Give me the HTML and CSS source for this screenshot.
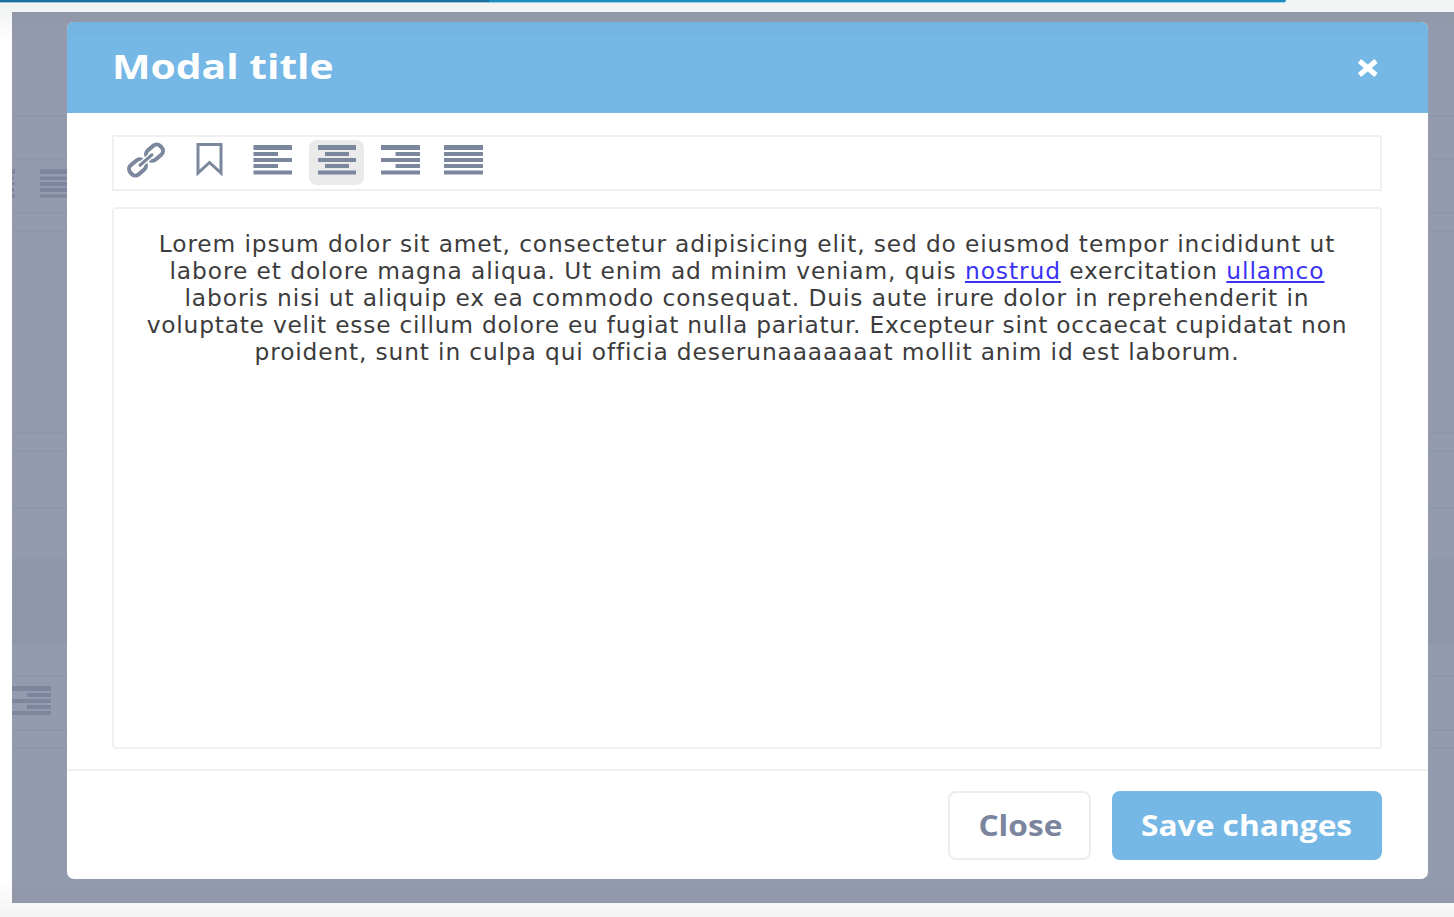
FILE: index.html
```html
<!DOCTYPE html>
<html lang="en">
<head>
<meta charset="utf-8">
<title>Modal title</title>
<link rel="stylesheet" href="styles.css">
</head>
<body>
<div class="progress"><div class="progress-start"></div><div class="progress-end"></div></div>
<div class="backdrop">
  <div class="behind">
    <div class="row r1"></div>
    <div class="row r2"></div>
    <div class="row r3">
      <svg class="ghost" width="56" height="30" viewBox="0 0 56 30"><path d="M0 0h3v5H0zM0 7.500h2v3H0zM0 13h3v3H0zM0 19h2v4H0zM0 25.500h3v3H0zM28 0h28v5H28zM28 7.500h28v3.500H28zM28 13h28v4H28zM28 19h28v4H28zM28 25.500h28v3H28z"/></svg>
    </div>
    <div class="row r4"></div>
    <div class="row r5"></div>
    <div class="row r6"></div>
    <div class="row r7"></div>
    <div class="gap"></div>
    <div class="band"></div>
    <div class="row r8"></div>
    <div class="row r9">
      <svg class="ghost" width="39" height="30" viewBox="0 0 39 30"><path d="M0 0h39v5H0zM15 7h24v4H15zM0 13h39v4H0zM15 19h24v4H15zM0 25h39v4H0z"/></svg>
    </div>
    <div class="row r10"></div>
  </div>
  <div class="modal">
    <div class="modal-header">
      <h1 class="modal-title">Modal title</h1>
      <svg class="dismiss" width="24" height="20" viewBox="0 0 24 20"><path d="M3.500 3L20 17M20 3L3.500 17"/></svg>
    </div>
    <div class="modal-body">
      <div class="toolbar">
        <span class="tool"><svg width="40" height="36" viewBox="0 0 40 36"><g class="chain" transform="translate(20 18) rotate(-41)"><rect x="-20" y="-6" width="17.500" height="12" rx="5"/><rect x="2.500" y="-6" width="17.500" height="12" rx="5"/><path class="halo" d="M-7 0h14"/><path d="M-8 0h16"/></g></svg></span>
        <span class="tool"><svg width="40" height="34" viewBox="0 0 40 34"><path class="mark" d="M9 2.500h23v28.500l-11.500-10.500l-11.500 10.500z"/></svg></span>
        <span class="tool"><svg width="39" height="34" viewBox="0 0 39 34"><path d="M.5 3h39v5H.5zM.5 10h24.500v4H.5zM.5 16h39v4H.5zM.5 22h24.500v4H.5zM.5 28.500h39v4H.5z"/></svg></span>
        <span class="tool active"><svg width="39" height="34" viewBox="0 0 39 34"><path d="M1 3h38v5H1zM8 10h24v4H8zM1 16h38v4H1zM8 22h24v4H8zM1 28.500h38v4H1z"/></svg></span>
        <span class="tool"><svg width="40" height="34" viewBox="0 0 40 34"><path d="M1 3h39v5H1zM15.500 10h24.500v4H15.500zM1 16h39v4H1zM15.500 22h24.500v4H15.500zM1 28.500h39v4H1z"/></svg></span>
        <span class="tool"><svg width="39" height="34" viewBox="0 0 39 34"><path d="M0 3h39v5H0zM0 10h39v4H0zM0 16h39v4H0zM0 22h39v4H0zM0 28.500h39v4H0z"/></svg></span>
      </div>
      <div class="editor">
        <p class="line l1">Lorem ipsum dolor sit amet, consectetur adipisicing elit, sed do eiusmod tempor incididunt ut</p>
        <p class="line l2">labore et dolore magna aliqua. Ut enim ad minim veniam, quis <a class="link">nostrud</a> exercitation <a class="link">ullamco</a></p>
        <p class="line l3">laboris nisi ut aliquip ex ea commodo consequat. Duis aute irure dolor in reprehenderit in</p>
        <p class="line l4">voluptate velit esse cillum dolore eu fugiat nulla pariatur. Excepteur sint occaecat cupidatat non</p>
        <p class="line l5">proident, sunt in culpa qui officia deserunaaaaaaat mollit anim id est laborum.</p>
      </div>
    </div>
    <div class="modal-footer">
      <button class="btn btn-close"><span>Close</span></button>
      <button class="btn btn-save"><span>Save changes</span></button>
    </div>
  </div>
</div>
</body>
</html>
```
FILE: styles.css
```css
* { box-sizing: border-box; }
html, body { margin: 0; height: 917px; overflow: hidden; }
body {
  font-family: "Open Sans", sans-serif;
  background: linear-gradient(#f2f3f3 0, #f3f4f4 12px, #fff 42px, #fff 880px, #f3f3f3 917px);
}
.progress { display: flex; height: 12px; }
.progress-start { width: 489px; height: 3px; background: #1a719f; border-bottom: 1px solid #9cc3d7; }
.progress-end { width: 797px; height: 3px; background: #1c8dbf; border-bottom: 1px solid #9ccde3; border-bottom-right-radius: 3px; }
.backdrop {
  position: relative;
  margin-left: 12px;
  height: 891px;
  padding: 10px 26px 0 55px;
  background: linear-gradient(#9098aa, #949bae 26px, #939bae 860px, #9098aa);
}
.behind { position: absolute; inset: 0; }
.row { border-bottom: 2px solid #8f97aa; }
.r1 { height: 105px; }
.r2 { height: 43px; }
.r3 { height: 54px; }
.r4 { height: 18px; }
.r5 { height: 202px; }
.r6 { height: 18px; }
.r7 { height: 57px; }
.gap { height: 50px; }
.band { height: 86px; background: #8f97aa; }
.r8 { height: 32px; }
.r9 { height: 54px; }
.r10 { height: 18px; }
.ghost { display: block; fill: #7d869c; transform: translateY(9px); }
.modal {
  position: relative;
  width: 1361px;
  height: 857px;
  border-radius: 7px;
  background: #fff;
  overflow: hidden;
  display: flex;
  flex-direction: column;
}
.modal-header {
  height: 91px;
  padding: 0 48px 0 45px;
  display: flex;
  align-items: center;
  justify-content: space-between;
  background: linear-gradient(#72b3de, #75b8e6 20px);
}
.modal-title {
  margin: 0 0 3px;
  font-size: 34px;
  line-height: 46px;
  font-weight: 700;
  color: #fff;
  white-space: nowrap;
  transform: scaleX(1.2);
  transform-origin: left;
}
.dismiss { fill: none; stroke: #fff; stroke-width: 5; margin-top: 1px; }
.modal-body { height: 656px; padding: 22px 46px 0 45px; }
.toolbar {
  height: 56px;
  border: 2px solid #f0f0ec;
  padding: 3px 0 0 4px;
  display: flex;
  gap: 8.600px;
}
.tool { width: 55px; height: 45px; padding-top: 2px; border-radius: 8px; display: flex; justify-content: center; }
.active { background: #eaeaea; }
.tool svg { fill: #7b879d; }
.tool .chain rect, .tool .chain path { fill: none; stroke: #7b879d; stroke-width: 4; }
.tool .chain path { stroke-width: 3; stroke-linecap: round; }
.tool .chain .halo { stroke: #fff; stroke-width: 6; stroke-linecap: butt; }
.tool .mark { fill: none; stroke: #7b879d; stroke-width: 3; }
.editor {
  margin-top: 16px;
  height: 542px;
  border: 2px solid #f0f0ec;
  border-radius: 4px;
  padding-top: 22px;
  font-family: "DejaVu Sans", sans-serif;
  font-size: 22.500px;
  color: #3c3c3c;
}
.line { margin: 0; height: 27px; line-height: 27px; text-align: center; white-space: nowrap; transform: scaleX(1.0365); }
.l1 { letter-spacing: 0.834px; }
.l2 { letter-spacing: 0.880px; }
.l3 { letter-spacing: 0.859px; }
.l4 { letter-spacing: 0.740px; }
.l5 { letter-spacing: 0.818px; }
.link { color: #3a33f5; text-decoration: underline; text-decoration-thickness: 2px; text-underline-offset: 2px; }
.modal-footer {
  flex: 1;
  border-top: 2px solid #f1f1ed;
  padding: 20px 46px 0;
  display: flex;
  justify-content: flex-end;
  gap: 21px;
}
.btn {
  height: 69px;
  padding: 0 0 1px;
  border-radius: 8px;
  font: 700 29px/40px "Open Sans", sans-serif;
  display: flex;
  align-items: center;
  justify-content: center;
  white-space: nowrap;
}
.btn span { transform: scaleX(1.093); }
.btn-close { width: 143px; border: 2px solid #ededea; background: #fff; color: #7b869e; padding-left: 2px; }
.btn-save { width: 270px; border: 0; background: #75b8e6; color: #fff; }
```
